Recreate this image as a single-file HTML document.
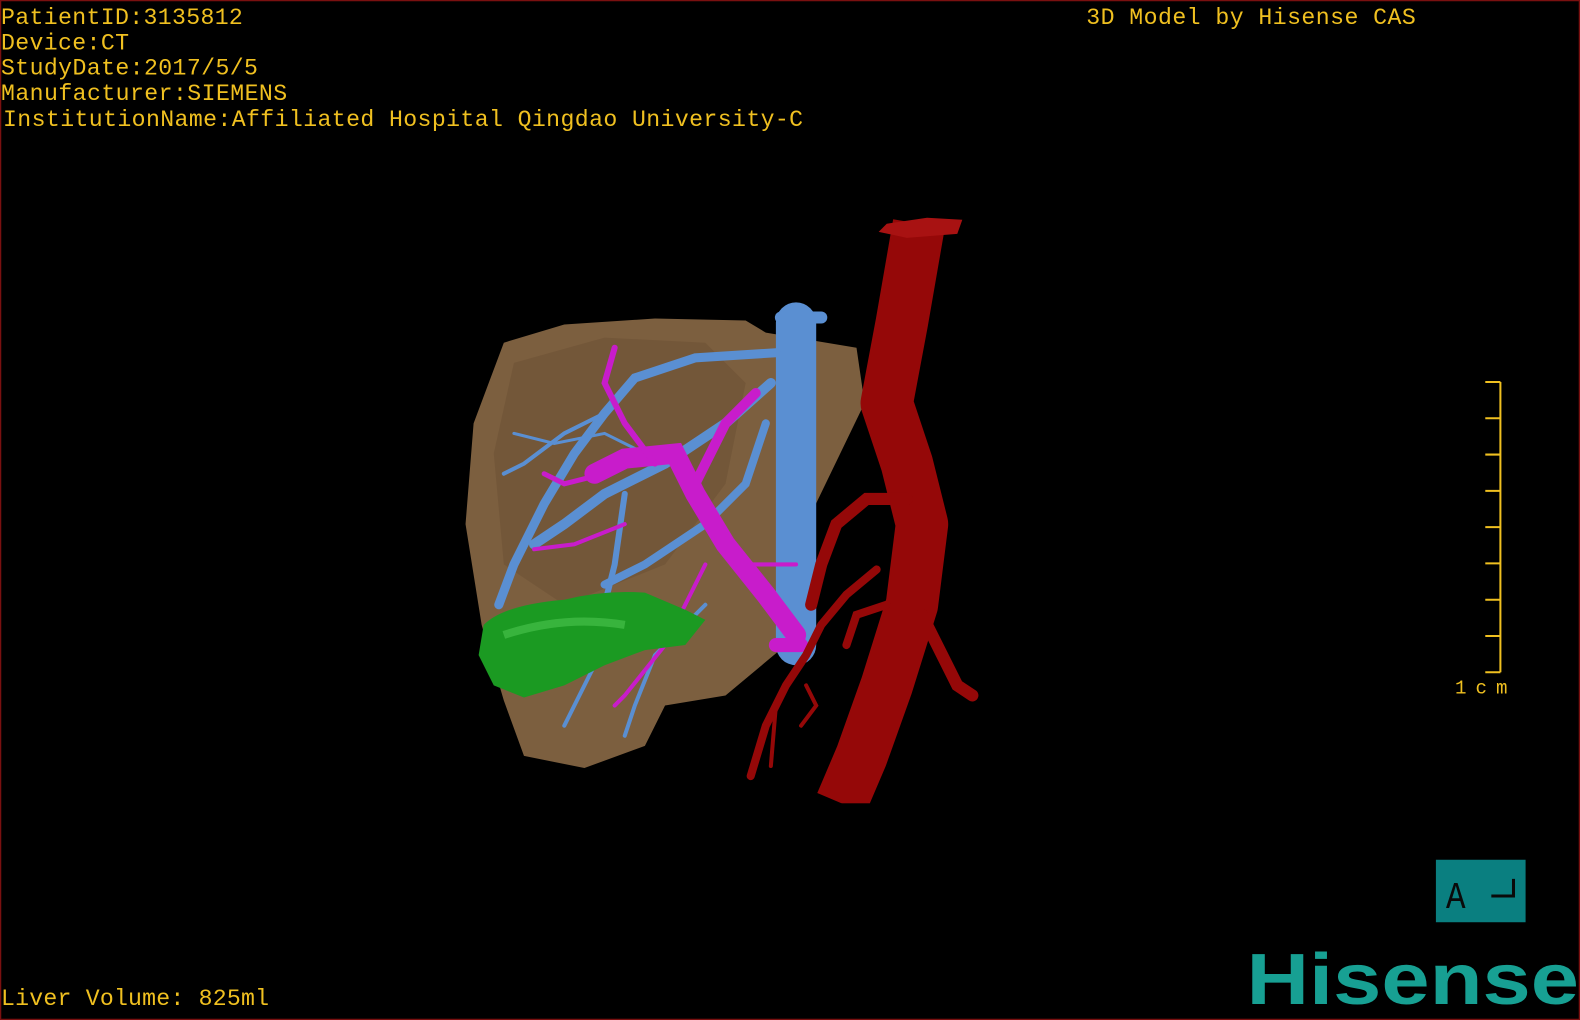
<!DOCTYPE html>
<html><head><meta charset="utf-8"><style>
html,body{margin:0;padding:0;background:#000;overflow:hidden}
svg{display:block}
</style></head><body>
<svg width="1580" height="1020" viewBox="0 0 1568 1012" preserveAspectRatio="none" xmlns="http://www.w3.org/2000/svg">
<rect x="0.5" y="0.5" width="1567" height="1011" fill="#000" stroke="#7a1010" stroke-width="1.5"/>
<g font-family="Liberation Mono, monospace" font-size="23" fill="#f0c020">
<text x="1" y="24" textLength="240">PatientID:3135812</text>
<text x="1" y="49" textLength="127">Device:CT</text>
<text x="1" y="74" textLength="255">StudyDate:2017/5/5</text>
<text x="1" y="99" textLength="284">Manufacturer:SIEMENS</text>
<text x="3" y="125" textLength="794">InstitutionName:Affiliated Hospital Qingdao University-C</text>
<text x="1078" y="24" textLength="327">3D Model by Hisense CAS</text>
<text x="1" y="997" textLength="266">Liver Volume: 825ml</text>
<text x="1444" y="688" font-size="19" textLength="52">1cm</text>
</g>
<g stroke="#f0c020" stroke-width="2" fill="none">
<path d="M1489 379V667M1474 379H1489M1474 415H1489M1474 451H1489M1474 487H1489M1474 523H1489M1474 559H1489M1474 595H1489M1474 631H1489M1474 667H1489"/>
</g>
<rect x="1425" y="853" width="89" height="62" fill="#0a7f80"/>
<text x="1435" y="901" font-family="Liberation Mono, monospace" font-size="38" fill="#0a0a0a" transform="translate(1435 0) scale(0.85 1) translate(-1435 0)">A</text>
<path d="M1480 889H1502V872" stroke="#0a0a0a" stroke-width="3" fill="none"/>
<text x="1237" y="996" font-family="Liberation Sans, sans-serif" font-weight="bold" font-size="72" fill="#17a093" textLength="330" lengthAdjust="spacingAndGlyphs">Hisense</text>
<!-- liver -->
<path d="M500 340 L560 322 L650 316 L740 318 L760 330 L850 345 L858 400 L800 520 L780 640 L720 690 L660 700 L640 740 L580 762 L520 750 L500 695 L478 620 L462 520 L470 420 Z" fill="#7c5f3f"/>
<path d="M510 360 L600 335 L700 340 L740 380 L720 480 L660 560 L560 600 L500 560 L490 450 Z" fill="#6e5236" opacity="0.6"/>
<g stroke="#5a8fd2" fill="none" stroke-linecap="round">
<path d="M790 320 L790 640" stroke-width="40"/>
<path d="M775 315 L815 315" stroke-width="12"/>
<path d="M770 350 L690 355 L630 375 L600 410 L570 450 L540 500 L510 560 L495 600" stroke-width="9"/>
<path d="M765 380 L720 420 L660 460 L600 490 L560 520 L530 540" stroke-width="10"/>
<path d="M760 420 L740 480 L700 520 L640 560 L600 580" stroke-width="8"/>
<path d="M620 490 L610 560 L600 600" stroke-width="6"/>
<path d="M600 410 L560 430 L520 460 L500 470" stroke-width="4"/>
<path d="M700 600 L650 650 L630 700 L620 730" stroke-width="4"/>
<path d="M680 610 L600 640 L570 700 L560 720" stroke-width="4"/>
<path d="M640 450 L600 430 L550 440 L510 430" stroke-width="3"/>
</g>
<g stroke="#c81ccb" fill="none" stroke-linecap="round">
<path d="M790 630 L760 590 L720 540 L690 490 L670 450 L620 455 L590 470" stroke-width="20"/>
<path d="M690 480 L720 420 L750 390" stroke-width="10"/>
<path d="M650 460 L620 420 L600 380 L610 345" stroke-width="6"/>
<path d="M600 470 L560 480 L540 470" stroke-width="5"/>
<path d="M620 520 L570 540 L530 545" stroke-width="4"/>
<path d="M700 560 L680 600 L660 640 L620 690 L610 700" stroke-width="4"/>
<path d="M740 560 L790 560" stroke-width="4"/>
<path d="M770 640 L795 640" stroke-width="14"/>
</g>
<path d="M480 620 Q500 600 560 595 Q600 585 640 588 L680 605 L700 615 L680 640 L640 645 L600 660 L560 680 L520 692 L490 680 L475 650 Z" fill="#1b9a22"/>
<path d="M500 630 Q560 610 620 620" stroke="#4cc750" stroke-width="8" fill="none" opacity="0.6"/>
<g fill="none" stroke="#950808" stroke-linejoin="round">
<path d="M912 222 L895 320 L880 400 L900 460 L915 520 L905 600 L880 680 L855 750 L835 797" stroke-width="52" stroke-linecap="butt"/>
</g>
<rect x="800" y="797" width="80" height="30" fill="#000"/>
<g fill="none" stroke="#950808" stroke-linecap="round">
<path d="M900 495 L860 495 L830 520 L815 560 L805 600" stroke-width="12"/>
<path d="M870 565 L840 590 L815 620 L800 650 L780 680 L760 720 L745 770" stroke-width="8"/>
<path d="M800 680 L810 700 L795 720" stroke-width="4"/>
<path d="M915 610 L935 650 L950 680 L965 690" stroke-width="12"/>
<path d="M880 600 L850 610 L840 640" stroke-width="8"/>
<path d="M770 700 L765 760" stroke-width="4"/>
</g>
<path d="M872 230 L880 222 L920 216 L955 218 L950 232 L900 236 Z" fill="#a81212"/>
</svg>
</body></html>
